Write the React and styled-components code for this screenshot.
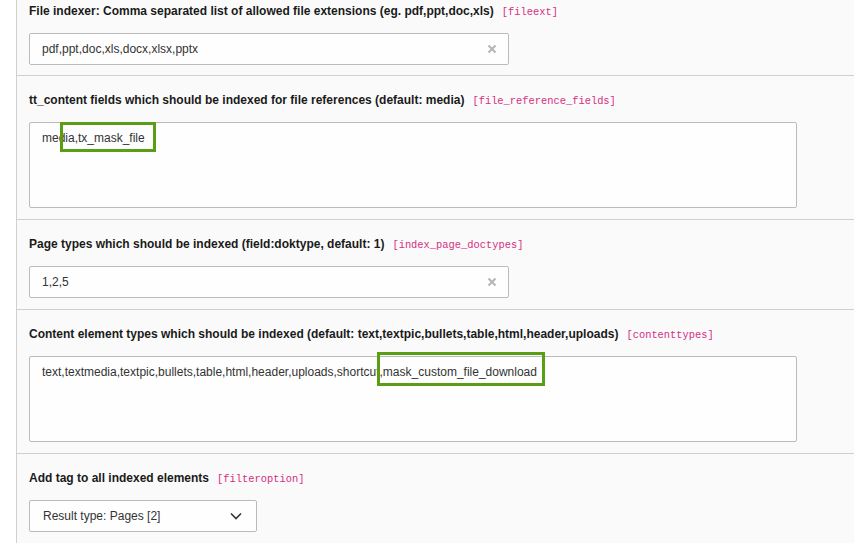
import React from "react";
import styled, { createGlobalStyle } from "styled-components";

const GlobalStyle = createGlobalStyle`
  html, body {
    margin: 0;
    padding: 0;
    background: #fff;
    font-family: "Liberation Sans", Arial, sans-serif;
    color: #000;
  }
`;

const fields = [
  {
    label: "File indexer: Comma separated list of allowed file extensions (eg. pdf,ppt,doc,xls)",
    code: "fileext",
    kind: "input",
    value: "pdf,ppt,doc,xls,docx,xlsx,pptx",
  },
  {
    label: "tt_content fields which should be indexed for file references (default: media)",
    code: "file_reference_fields",
    kind: "textarea",
    value: "media,tx_mask_file",
    mark: { left: 30, top: -1, width: 96, height: 30 },
  },
  {
    label: "Page types which should be indexed (field:doktype, default: 1)",
    code: "index_page_doctypes",
    kind: "input",
    value: "1,2,5",
  },
  {
    label:
      "Content element types which should be indexed (default: text,textpic,bullets,table,html,header,uploads)",
    code: "contenttypes",
    kind: "textarea",
    value: "text,textmedia,textpic,bullets,table,html,header,uploads,shortcut,mask_custom_file_download",
    mark: { left: 347, top: -5, width: 168, height: 34 },
  },
  {
    label: "Add tag to all indexed elements",
    code: "filteroption",
    kind: "select",
    value: "Result type: Pages [2]",
  },
];

const App = () => {
  return (
    <React.Fragment>
      <GlobalStyle />
      <Page>
        <Panel>
          {fields.map((f, i) => (
            <Section key={f.code} first={i === 0}>
              <Label>
                {f.label}
                <Code>[{f.code}]</Code>
              </Label>
              {f.kind === "input" && (
                <InputBox>
                  <Value>{f.value}</Value>
                  <Clear>
                    <svg width="10" height="10" viewBox="0 0 10 10">
                      <path d="M1.5 1.5 L8.5 8.5 M8.5 1.5 L1.5 8.5" stroke="#b5b5b5" strokeWidth="2" />
                    </svg>
                  </Clear>
                </InputBox>
              )}
              {f.kind === "textarea" && (
                <TextArea>
                  <Value>{f.value}</Value>
                  {f.mark && (
                    <Mark
                      style={{
                        left: f.mark.left,
                        top: f.mark.top,
                        width: f.mark.width,
                        height: f.mark.height,
                      }}
                    />
                  )}
                </TextArea>
              )}
              {f.kind === "select" && (
                <SelectBox>
                  <Value>{f.value}</Value>
                  <svg width="14" height="14" viewBox="0 0 14 14">
                    <path d="M2 4.5 L7 9.5 L12 4.5" fill="none" stroke="#333" strokeWidth="1.6" />
                  </svg>
                </SelectBox>
              )}
            </Section>
          ))}
        </Panel>
      </Page>
    </React.Fragment>
  );
};

const Page = styled.div`
  width: 854px;
  height: 543px;
  overflow: hidden;
  padding-left: 16px;
  box-sizing: border-box;
  background: #fff;
`;

const Panel = styled.div`
  background: #fafafa;
  border-left: 1px solid #cfcfcf;
  min-height: 100%;
`;

const Section = styled.div`
  padding: ${(p) => (p.first ? "1px 12px 10px" : "14px 12px 11px")};
  border-bottom: 1px solid #cfcfcf;
`;

const Label = styled.div`
  font-size: 12px;
  font-weight: 700;
  line-height: 21px;
  color: #1a1a1a;
  margin-bottom: 10px;
  white-space: nowrap;
`;

const Code = styled.code`
  font-family: "Liberation Mono", "Courier New", monospace;
  font-size: 10.4px;
  font-weight: 400;
  color: #d42f82;
  margin-left: 8px;
`;

const Field = styled.div`
  box-sizing: border-box;
  background: #fefefe;
  border: 1px solid #bbb;
  border-radius: 2px;
  font-size: 12px;
  color: #333;
`;

const InputBox = styled(Field)`
  width: 480px;
  height: 32px;
  display: flex;
  align-items: center;
  justify-content: space-between;
  padding: 0 12px;
`;

const TextArea = styled(Field)`
  position: relative;
  width: 768px;
  height: 86px;
  padding: 8px 12px;
  line-height: 14px;
`;

const SelectBox = styled(Field)`
  width: 228px;
  height: 32px;
  display: flex;
  align-items: center;
  justify-content: space-between;
  padding: 0 13px 0 13px;
`;

const Value = styled.span`
  white-space: nowrap;
`;

const Clear = styled.span`
  display: flex;
  align-items: center;
  margin-right: -1px;
`;

const Mark = styled.div`
  position: absolute;
  box-sizing: border-box;
  border: 3px solid #5a9e16;
`;

export default App;
